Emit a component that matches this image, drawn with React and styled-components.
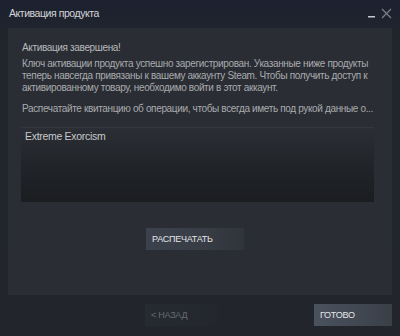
import React from 'react';
import styled, { createGlobalStyle } from 'styled-components';

const GlobalStyle = createGlobalStyle`
  html, body {
    margin: 0;
    padding: 0;
    background: #1e2128;
  }
  body {
    font-family: "Liberation Sans", Arial, sans-serif;
  }
`;

const Window = styled.div`
  width: 400px;
  height: 336px;
  display: flex;
  flex-direction: column;
  background: linear-gradient(to bottom, #1c2130 0%, #21252c 12%, #22262c 100%);
  overflow: hidden;
`;

const TitleBar = styled.div`
  height: 28px;
  flex: none;
  display: flex;
  align-items: center;
  justify-content: space-between;
  padding: 0 8px 2px 9px;
  box-sizing: border-box;
`;

const Title = styled.div`
  font-size: 10.5px;
  letter-spacing: -0.45px;
  color: #d3d5d8;
`;

const Controls = styled.div`
  display: flex;
  align-items: center;
  gap: 4px;
`;

const Panel = styled.div`
  flex: 1;
  margin: 0 8px;
  background: #2a2d33;
  padding: 13px 18px 0 14px;
  display: flex;
  flex-direction: column;
  box-sizing: border-box;
`;

const Heading = styled.div`
  font-size: 10px;
  line-height: 13px;
  letter-spacing: -0.35px;
  color: #b7b9bd;
`;

const Text = styled.p`
  margin: ${({ $top }) => $top}px 0 0;
  font-size: 10px;
  line-height: 12px;
  letter-spacing: -0.35px;
  color: #a9abaf;
  white-space: ${({ $nowrap }) => ($nowrap ? 'nowrap' : 'normal')};
`;

const ProductList = styled.div`
  margin-top: 12px;
  height: 75px;
  margin-left: -1px;
  background: linear-gradient(to bottom, #2b2e34 0%, #1f2226 60%, #1b1d21 100%);
  border-top: 1px solid #34373d;
  padding: 2px 4px;
  box-sizing: border-box;
`;

const ProductName = styled.div`
  font-size: 10.5px;
  letter-spacing: -0.3px;
  color: #c6c8cb;
`;

const Center = styled.div`
  display: flex;
  justify-content: center;
  margin-top: 26px;
  padding-right: 6px;
`;

const Button = styled.button`
  width: ${({ $w }) => $w}px;
  height: ${({ $h }) => $h}px;
  border: none;
  padding: 0 0 0 6px;
  text-align: left;
  font-family: "Liberation Sans", Arial, sans-serif;
  font-size: 9px;
  letter-spacing: -0.25px;
  color: ${({ $dim }) => ($dim ? '#676b72' : '#e4e6e8')};
  background: ${({ $variant }) =>
    $variant === 'primary'
      ? 'linear-gradient(to right, #4a525e 0%, #404751 60%, #3a3f47 100%)'
      : $variant === 'ghost'
      ? 'linear-gradient(to right, #262a31 0%, #23272d 100%)'
      : 'linear-gradient(to right, #3c424d 0%, #373c45 60%, #30343b 100%)'};
`;

const Footer = styled.div`
  height: 40px;
  flex: none;
  display: flex;
  align-items: center;
  justify-content: flex-end;
  gap: 96px;
  padding: 0 8px 1px;
`;

function App() {
  return (
    <>
      <GlobalStyle />
      <Window>
        <TitleBar>
          <Title>Активация продукта</Title>
          <Controls>
            <svg width="10" height="10" viewBox="0 0 10 10">
              <rect x="1" y="8" width="7" height="1.5" fill="#c8cacd" />
            </svg>
            <svg width="11" height="11" viewBox="0 0 11 11">
              <path d="M1 1 L10 10 M10 1 L1 10" stroke="#7d8187" strokeWidth="1.2" />
            </svg>
          </Controls>
        </TitleBar>
        <Panel>
          <Heading>Активация завершена!</Heading>
          <Text $top={4}>
            Ключ активации продукта успешно зарегистрирован. Указанные ниже продукты
            теперь навсегда привязаны к вашему аккаунту Steam. Чтобы получить доступ к
            активированному товару, необходимо войти в этот аккаунт.
          </Text>
          <Text $top={9} $nowrap>
            Распечатайте квитанцию об операции, чтобы всегда иметь под рукой данные о...
          </Text>
          <ProductList>
            <ProductName>Extreme Exorcism</ProductName>
          </ProductList>
          <Center>
            <Button $w={98} $h={22}>РАСПЕЧАТАТЬ</Button>
          </Center>
        </Panel>
        <Footer>
          <Button $w={73} $h={22} $variant="ghost" $dim>&lt; НАЗАД</Button>
          <Button $w={78} $h={22} $variant="primary">ГОТОВО</Button>
        </Footer>
      </Window>
    </>
  );
}

export default App;
